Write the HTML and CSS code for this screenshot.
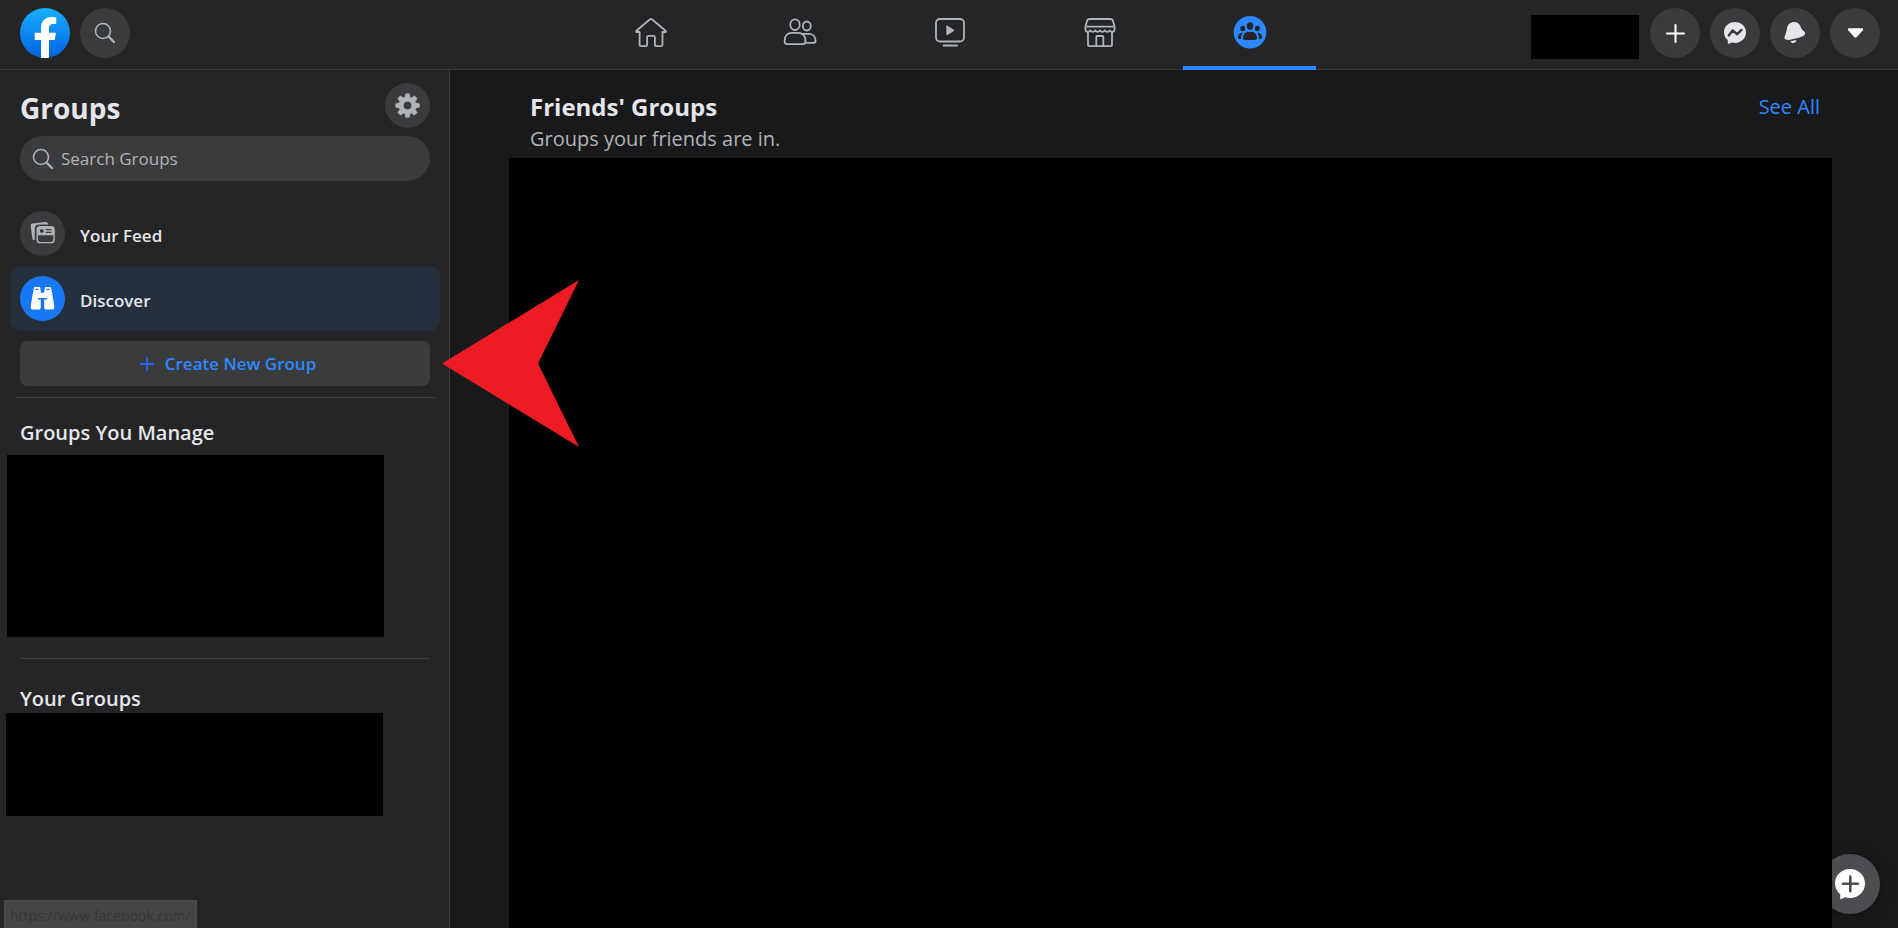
FILE: index.html
```html
<!DOCTYPE html>
<html lang="en">
<head>
<meta charset="utf-8">
<title>Groups</title>
<meta name="viewport" content="width=device-width, initial-scale=1">
<link rel="stylesheet" href="styles.css">
</head>
<body>
<header class="topbar">
  <div class="topbar-start">
    <a class="logo" href="#" aria-label="Home page">
      <svg viewBox="0 0 50 50" width="50" height="50" aria-hidden="true">
        <defs>
          <linearGradient id="logo-blue" x1="0" y1="0" x2="0" y2="1">
            <stop offset="0" stop-color="#19afff"/>
            <stop offset="1" stop-color="#0062e0"/>
          </linearGradient>
        </defs>
        <circle cx="25" cy="25" r="25" fill="url(#logo-blue)"/>
        <path fill="#fff" d="M21 49.700V32h-6.300v-7.300H21v-4.500C21 13 25 9 31.300 9c1.700 0 3.600.2 4.900.5V16h-2.800c-3.300 0-4.400 1.800-4.400 4v4.700h6.900L34.800 32H29v17.700a25 25 0 0 1-8 0z"/>
      </svg>
    </a>
    <button class="round-button" type="button" aria-label="Search">
      <svg viewBox="0 0 24 24" width="24" height="24" class="search-icon" aria-hidden="true">
        <circle cx="10" cy="10" r="7.500"/><path class="search-handle" d="M15.500 15.500l5.500 5.500"/>
      </svg>
    </button>
  </div>
  <nav class="tabs" aria-label="Main">
    <a class="tab" href="#" aria-label="Home">
      <svg viewBox="0 0 40 40" width="40" height="40" class="tab-icon" aria-hidden="true">
        <path d="M19 7.300a1.500 1.500 0 0 1 2 0l13.500 11.400c.8.700.5 1.300-.4 1.300h-2.600v12.700c0 .8-.6 1.400-1.400 1.400h-5.200c-.6 0-1-.4-1-1v-7.800c0-.8-.6-1.400-1.400-1.400h-5c-.8 0-1.400.6-1.400 1.400v7.800c0 .6-.4 1-1 1H10c-.8 0-1.400-.6-1.400-1.400V20H5.900c-.9 0-1.200-.6-.4-1.300z"/>
      </svg>
    </a>
    <a class="tab" href="#" aria-label="Friends">
      <svg viewBox="0 0 40 40" width="40" height="40" class="tab-icon" aria-hidden="true">
        <ellipse cx="15" cy="12.700" rx="4.700" ry="5.300"/>
        <ellipse cx="26.800" cy="14" rx="4" ry="4.500"/>
        <path d="M12 20.800h6c4.500 0 7.400 3.200 7.400 7.400v1.600c0 1.500-.8 2.300-2.300 2.300H7c-1.500 0-2.300-.8-2.300-2.300v-1.600c0-4.200 2.800-7.400 7.300-7.400z"/>
        <path d="M22.500 21.800h5.800c4.400 0 7.200 2.600 7.200 6.300v.8c0 1.200-.7 1.900-1.900 1.900h-8.200"/>
      </svg>
    </a>
    <a class="tab" href="#" aria-label="Watch">
      <svg viewBox="0 0 40 40" width="40" height="40" class="tab-icon" aria-hidden="true">
        <rect x="6" y="7" width="28" height="22.500" rx="4"/>
        <path d="M13.500 33.500h13.500"/>
        <path class="solid" d="M16.300 14.500c0-.8.7-1.100 1.300-.8l6.300 4c.6.400.6 1 0 1.400l-6.300 4c-.6.300-1.300 0-1.300-.8z"/>
      </svg>
    </a>
    <a class="tab" href="#" aria-label="Marketplace">
      <svg viewBox="0 0 40 40" width="40" height="40" class="tab-icon" aria-hidden="true">
        <path d="M9.500 7h21c1.200 0 1.900.5 2.300 1.600l1.700 5.600v3.300c0 1.500-.9 2.300-2.200 2.300-1.200 0-1.900-.5-2.500-1.400-.7 1-1.400 1.400-2.500 1.400s-1.800-.5-2.500-1.400c-.7 1-1.400 1.400-2.400 1.400S20.600 19.300 20 18.400c-.7 1-1.400 1.400-2.400 1.400s-1.800-.5-2.500-1.400c-.6 1-1.300 1.400-2.400 1.400s-1.800-.5-2.500-1.400c-.7 1-1.300 1.400-2.500 1.400-1.300 0-2.200-.8-2.200-2.300v-3.300l1.700-5.600C7.600 7.500 8.300 7 9.500 7z"/>
        <path d="M5.500 14.700h29M8 20v12.500c0 1 .6 1.600 1.600 1.600h20.800c1 0 1.600-.6 1.600-1.600V20M16.300 34v-9c0-.7.400-1 1-1h5c.6 0 1 .3 1 1v9"/>
      </svg>
    </a>
    <a class="tab tab-active" href="#" aria-label="Groups" aria-current="page">
      <svg viewBox="0 0 40 40" width="40" height="40" aria-hidden="true">
        <circle cx="20" cy="20.300" r="16.300" fill="#2d88ff"/>
        <g fill="#242526">
          <ellipse cx="20" cy="14" rx="3.300" ry="3.700"/>
          <ellipse cx="12.700" cy="16.500" rx="2.400" ry="2.700"/>
          <ellipse cx="27.300" cy="16.500" rx="2.400" ry="2.700"/>
          <path d="M18 20h4c3 0 5 2.700 5 6 0 1.300-.6 2-1.900 2H14.900c-1.300 0-1.900-.7-1.900-2 0-3.300 2-6 5-6z"/>
          <path d="M12.800 20.700c-1.200 1.500-1.700 3.200-1.700 5.300 0 .3 0 .6.100.9H9.500C8.500 26.900 8 26.300 8 25.300c0-2.700 1.900-4.800 4.800-4.600zM27.200 20.700c1.200 1.500 1.700 3.200 1.700 5.300 0 .3 0 .6-.1.900h1.700c1 0 1.500-.6 1.500-1.600 0-2.700-1.900-4.800-4.800-4.600z"/>
        </g>
      </svg>
    </a>
  </nav>
  <div class="topbar-end">
    <div class="profile-block"></div>
    <button class="round-button" type="button" aria-label="Create">
      <svg viewBox="0 0 24 24" width="24" height="24" aria-hidden="true"><path d="M12.500 4v17M4 12.500h17" fill="none" stroke="#fff" stroke-width="2" stroke-linecap="round"/></svg>
    </button>
    <button class="round-button" type="button" aria-label="Messenger">
      <svg viewBox="0 0 24 24" width="24" height="24" aria-hidden="true">
        <path fill="#e4e6eb" d="M12 1C5.700 1 1 5.500 1 11.300c0 3 1.300 5.600 3.400 7.500.3.300.4.600.4 1v2c0 .7.600 1.200 1.300.9l2.300-1 .9-.1c.9.200 1.800.3 2.700.3 6.300 0 11-4.700 11-10.600S18.300 1 12 1z"/>
        <path d="M5.800 14.400l3.800-5 4.600 3.800 4.300-4.300" fill="none" stroke="#3a3b3c" stroke-width="2.400" stroke-linejoin="round" stroke-linecap="round"/>
      </svg>
    </button>
    <button class="round-button" type="button" aria-label="Notifications">
      <svg viewBox="0 0 24 24" width="24" height="24" aria-hidden="true">
        <path fill="#e4e6eb" d="M4 7.200C4.600 3.400 7.600 1 11 1c3.300 0 5.600 1.800 6.800 5 .9 2.300 1.400 3 3.200 4.300 1.200.9 1.500 2.200.7 3.400-1 1.300-2.600 1.900-5.200 2.700l-7.200 1.900c-2.800.7-4.800.9-6.300.3-1.300-.5-1.800-1.800-1.300-3.200C2.800 12.500 3.500 10.500 4 7.200zM7.500 20.200l5.800-1.200c-.2 1.800-1.300 3-3 3-1.300 0-2.300-.6-2.800-1.800z"/>
      </svg>
    </button>
    <button class="round-button" type="button" aria-label="Account">
      <svg viewBox="0 0 24 24" width="24" height="24" aria-hidden="true"><path fill="#fff" d="M6 7.200h13c1.200 0 1.500 1.200.8 2l-5.900 6.700c-.8.900-2 .9-2.800 0L5.200 9.200c-.7-.8-.4-2 .8-2z"/></svg>
    </button>
  </div>
</header>

<div class="page">
  <aside class="sidebar">
    <div class="sidebar-title">
      <h1>Groups</h1>
      <button class="round-button round-small" type="button" aria-label="Settings">
        <svg viewBox="0 0 26 26" width="25" height="25" aria-hidden="true">
          <path fill="#b0b3b8" fill-rule="evenodd" d="M11.300.8h3.400l.8 3.600 1.700.7L20.300 3l2.600 2.700-2 3.100.7 1.700 3.700.8v3.400l-3.700.8-.7 1.700 2 3.100-2.600 2.600-3.100-2-1.700.7-.8 3.700h-3.400l-.8-3.700-1.700-.7-3.100 2L3 20.300l2.100-3.100-.7-1.700-3.600-.8v-3.400l3.600-.8.7-1.700L3 5.700 5.700 3l3.100 2.100 1.700-.7zM13 8.500a4.500 4.500 0 1 0 0 9 4.500 4.500 0 0 0 0-9z" stroke="#b0b3b8" stroke-width=".8" stroke-linejoin="round"/>
        </svg>
      </button>
    </div>
    <label class="search-field">
      <svg viewBox="0 0 24 24" width="24" height="24" class="search-icon" aria-hidden="true">
        <circle cx="10" cy="10" r="7.500"/><path class="search-handle" d="M15.500 15.500l5.500 5.500"/>
      </svg>
      <input type="search" placeholder="Search Groups" aria-label="Search Groups">
    </label>
    <nav class="side-links" aria-label="Groups">
      <a class="side-link" href="#">
        <span class="side-icon">
          <svg viewBox="0 0 26 26" width="25" height="25" aria-hidden="true">
            <path fill="#b0b3b8" d="M4.300 19.800c-1 0-1.700-.6-1.800-1.600L.7 5.500C.5 3.900 1.300 2.900 2.800 2.700L15.800 1c1.500-.2 2.500.4 3 1.800l.2.900H9.500c-2.900 0-4.600 1.700-4.600 4.600v11.500z"/>
            <rect x="7.500" y="6" width="17.500" height="16.500" rx="3" fill="none" stroke="#b0b3b8" stroke-width="1.500"/>
            <path fill="#b0b3b8" d="M8 8c0-1 .6-2 2-2h13c1.400 0 2 1 2 2v6.800H8z"/>
            <circle cx="12.300" cy="10.300" r="2" fill="#3a3b3c"/>
            <path d="M16.800 8.900h5M16.800 11.800h5" stroke="#3a3b3c" stroke-width="1.300" stroke-linecap="round"/>
          </svg>
        </span>
        <span class="side-label">Your Feed</span>
      </a>
      <a class="side-link side-link-active" href="#" aria-current="page">
        <span class="side-icon">
          <svg viewBox="0 0 26 26" width="25" height="25" aria-hidden="true">
            <path fill="#fff" d="M4 2.200C4.100 1.400 4.600 1 5.400 1h3.900c.8 0 1.300.4 1.400 1.200L11.300 7h3.400l.6-4.800c.1-.8.600-1.200 1.400-1.200h3.900c.8 0 1.300.4 1.400 1.200l1 5.300 2.100 12.200.1 2.600c0 1.300-.8 2.100-2.100 2.100h-6.200c-1.300 0-2.100-.8-2.100-2.100V14H17.600v-1.500H8.400V14h2.800v8.300c0 1.300-.8 2.100-2.100 2.100H2.900c-1.300 0-2.100-.8-2.100-2.100l.1-2.600L3 7.500z"/>
            <path d="M5.800 3.600h3M17.200 3.600h3" stroke="#1877f2" stroke-width="1.300"/>
          </svg>
        </span>
        <span class="side-label">Discover</span>
      </a>
    </nav>
    <button class="create-button" type="button">
      <svg viewBox="0 0 16 16" width="16" height="16" aria-hidden="true"><path d="M8 1v14M1 8h14" fill="none" stroke="#2e62ff" stroke-width="1.800"/></svg>
      Create New Group
    </button>
    <section class="group-section">
      <h2>Groups You Manage</h2>
      <div class="blank-block blank-tall"></div>
    </section>
    <section class="group-section group-section-own">
      <h2>Your Groups</h2>
      <div class="blank-block"></div>
    </section>
  </aside>

  <main class="content">
    <div class="content-head">
      <div>
        <h2>Friends' Groups</h2>
        <p>Groups your friends are in.</p>
      </div>
      <a class="see-all" href="#">See All</a>
    </div>
    <div class="content-block"></div>
    <button class="new-message" type="button" aria-label="New message">
      <svg viewBox="0 0 32 32" width="32" height="32" aria-hidden="true">
        <path fill="#fff" d="M16 1C7.500 1 1 7.300 1 15.500c0 4.500 2 8 5.200 10.700v4c0 .8.700 1.200 1.400.8l3.400-1.700c1.600.5 3.200.7 5 .7 8.500 0 15-6.300 15-14.500S24.500 1 16 1z"/>
        <path d="M16.300 8.500v14.800M9 15.800h14.800" fill="none" stroke="#4c4d50" stroke-width="2.600" stroke-linecap="round"/>
      </svg>
    </button>
  </main>
</div>

<svg class="pointer" viewBox="0 0 137 167" width="137" height="167" aria-hidden="true"><path fill="#ed1c24" d="M0 83.500L137 0 96 83.500 137 167z"/></svg>
<div class="status-tip">https://www.facebook.com/</div>
</body>
</html>
```

FILE: styles.css
```css
* {
  box-sizing: border-box;
}

body {
  margin: 0;
  min-height: 100vh;
  display: flex;
  flex-direction: column;
  position: relative;
  background: #18191a;
  color: #e4e6eb;
  font-family: "Open Sans", "Noto Sans", sans-serif;
  font-size: 17px;
  line-height: 24px;
}

h1,
h2,
p {
  margin: 0;
}

a {
  color: inherit;
  text-decoration: none;
}

button,
input {
  font: inherit;
  color: inherit;
  border: 0;
  padding: 0;
}

svg {
  display: block;
  flex: none;
}

/* Top bar */
.topbar {
  display: grid;
  grid-template-columns: 1fr auto 1fr;
  height: 70px;
  padding: 0 18px 0 20px;
  background: #242526;
  border-bottom: 1px solid #393a3b;
}

.topbar-start,
.topbar-end {
  display: flex;
  gap: 10px;
  padding-top: 8px;
}

.topbar-end {
  justify-content: flex-end;
}

.round-button {
  display: grid;
  place-items: center;
  flex: none;
  width: 50px;
  height: 50px;
  border-radius: 50%;
  background: #3a3b3c;
}

.round-small {
  width: 45px;
  height: 45px;
}

.profile-block {
  width: 108px;
  height: 44px;
  margin: 7px 1px 0 0;
  background: #000;
}

.search-icon {
  fill: none;
  stroke: #b0b3b8;
  stroke-width: 1.600;
}

.search-handle {
  stroke-width: 2.400;
  stroke-linecap: round;
}

.tabs {
  display: flex;
  justify-content: space-between;
  width: 732px;
}

.tab {
  display: flex;
  justify-content: center;
  width: 133px;
  height: 70px;
  padding-top: 12px;
}

.tab-active {
  border-bottom: 4px solid #2d88ff;
}

.tab-icon {
  fill: none;
  stroke: #b0b3b8;
  stroke-width: 1.800;
  stroke-linecap: round;
  stroke-linejoin: round;
}

.tab-icon .solid {
  fill: #b0b3b8;
  stroke: none;
}

/* Page columns */
.page {
  display: flex;
  flex: 1;
}

.sidebar {
  flex: none;
  width: 450px;
  padding: 13px 9px 0 10px;
  background: #242526;
  border-right: 1px solid #393a3b;
}

.sidebar-title {
  display: flex;
  justify-content: space-between;
  padding: 0 10px;
}

.sidebar-title h1 {
  padding-top: 7px;
  font-size: 28px;
  line-height: 36px;
}

.search-field {
  display: flex;
  align-items: center;
  gap: 6px;
  height: 45px;
  margin: 8px 10px 20px;
  padding: 0 11px;
  border-radius: 23px;
  background: #3a3b3c;
}

.search-field input {
  flex: 1;
  min-width: 0;
  background: none;
  outline: none;
}

.search-field input::placeholder {
  color: #b0b3b8;
  opacity: 1;
}

.side-link {
  display: flex;
  align-items: center;
  gap: 15px;
  height: 65px;
  padding: 0 10px;
  border-radius: 10px;
  font-weight: 600;
}

.side-label {
  padding-top: 5px;
}

.side-icon {
  display: grid;
  place-items: center;
  width: 45px;
  height: 45px;
  border-radius: 50%;
  background: #3a3b3c;
}

.side-link-active {
  background: #252f3c;
}

.side-link-active .side-icon {
  background: #1877f2;
}

.create-button {
  display: flex;
  align-items: center;
  justify-content: center;
  gap: 10px;
  width: calc(100% - 20px);
  height: 45px;
  margin: 10px 10px 0;
  padding: 1px 0 0 5px;
  border-radius: 7px;
  background: #3a3b3c;
  color: #2d88ff;
  font-weight: 600;
}

.group-section {
  margin: 11px 5px 0;
  padding-top: 22px;
  border-top: 1px solid #3e4042;
}

.group-section h2 {
  padding-left: 5px;
  font-size: 20px;
  font-weight: 600;
  line-height: 26px;
}

.blank-block {
  width: 377px;
  height: 103px;
  margin: 1px 0 0 -14px;
  background: #000;
}

.blank-tall {
  height: 182px;
  margin: 9px 0 0 -8px;
}

.group-section-own {
  margin: 21px 10px 0;
  padding-top: 27px;
}

.group-section-own h2 {
  padding-left: 0;
}

.content {
  position: relative;
  display: flex;
  flex: 1;
  flex-direction: column;
  min-width: 0;
  padding: 21px 66px 0 59px;
}

.content-head {
  display: flex;
  justify-content: space-between;
  padding: 0 12px 3px 21px;
}

.content-head h2 {
  font-size: 24px;
  line-height: 32px;
}

.content-head p {
  font-size: 20px;
  line-height: 32px;
  color: #b0b3b8;
}

.see-all {
  font-size: 20px;
  line-height: 32px;
  color: #2d88ff;
}

.content-block {
  position: relative;
  z-index: 1;
  flex: 1;
  background: #000;
}

/* Floating layers */
.new-message {
  position: absolute;
  right: 18px;
  bottom: 14px;
  display: grid;
  place-items: center;
  width: 60px;
  height: 60px;
  border-radius: 50%;
  background: #4c4d50;
  box-shadow: 0 2px 12px rgba(0, 0, 0, 0.3);
}

.pointer {
  position: absolute;
  z-index: 2;
  top: 280px;
  left: 442px;
}

.status-tip {
  position: absolute;
  bottom: 0;
  left: 4px;
  height: 28px;
  padding: 3px 5px 0;
  border: 1px solid #4a4b4c;
  border-bottom: 0;
  background: #444546;
  color: #353637;
  font-size: 14px;
}
```
